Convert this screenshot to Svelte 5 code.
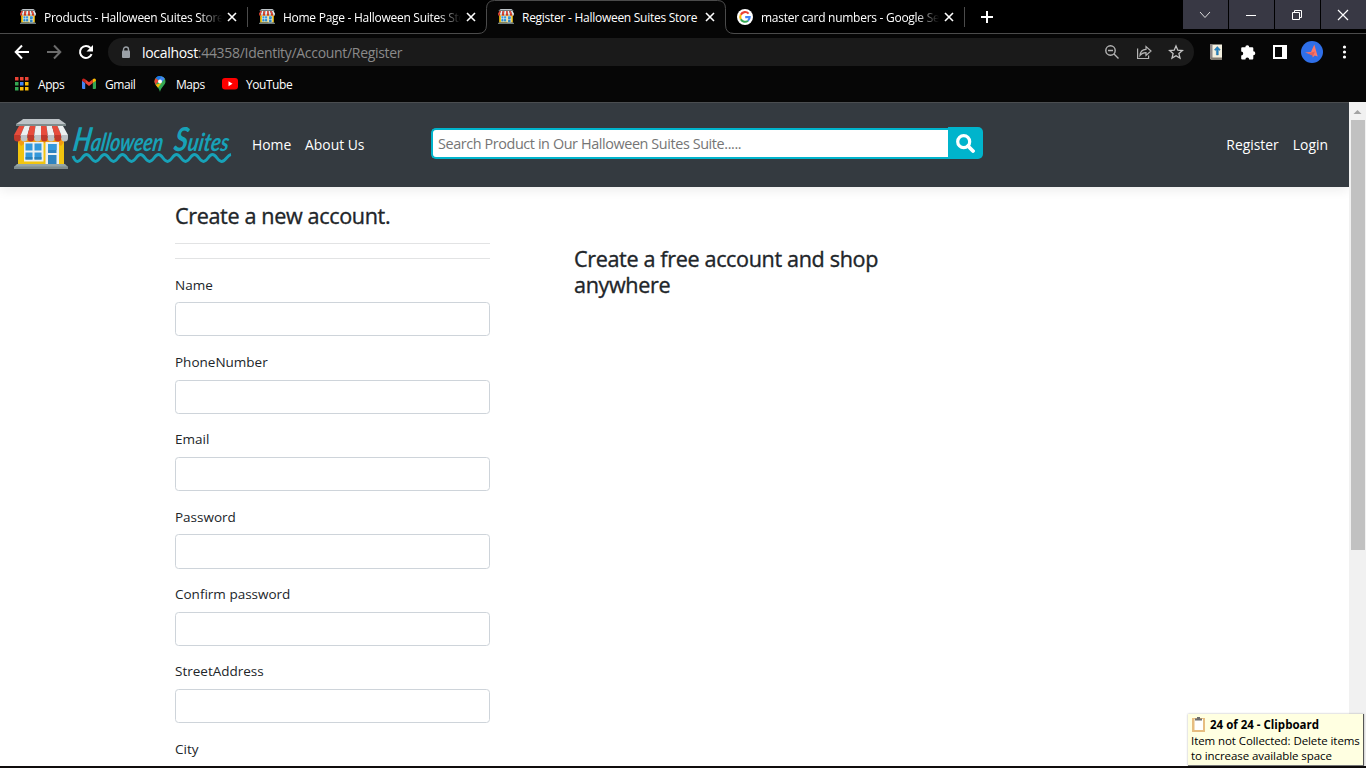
<script>
  const tabs = [
    { title: 'Products - Halloween Suites Store', icon: 'store' },
    { title: 'Home Page - Halloween Suites Store', icon: 'store' },
    { title: 'Register - Halloween Suites Store', icon: 'store', active: true },
    { title: 'master card numbers - Google Search', icon: 'google' }
  ];
  const fields = ['Name', 'PhoneNumber', 'Email', 'Password', 'Confirm password', 'StreetAddress', 'City'];
  const stripes = [0, 1, 2, 3, 4, 5, 6, 7];
  const dots = ['#ea4335', '#ea4335', '#ea4335', '#34a853', '#4285f4', '#fbbc05', '#34a853', '#fbbc05', '#fbbc05'];
  const wave = 'M73 156 Q75 161.500 77.500 161.500 ' +
    Array.from({ length: 8 }, (_, i) => {
      const x = 77.5 + i * 18;
      return `C${x + 4} 161.500 ${x + 5} 154.500 ${x + 9} 154.500 S${x + 14} 161.500 ${x + 18} 161.500`;
    }).join(' ') + ' C226 161.500 227 155 231 154.500';
</script>

{#snippet store(w, h)}
  <svg width={w} height={h} viewBox="0 0 54 50" preserveAspectRatio="none">
    <rect x="4" y="19" width="46" height="26" fill="#f1c40f" />
    <path d="M4 20h46v3l-3 4-4-3H11l-4 3-3-4z" fill="#f39c12" />
    <path d="M8 1 9 0h36l7 5H2z" fill="#bdc3c7" />
    <path d="M2 5h50v2H2z" fill="#7f8c8d" />
    {#each stripes as i}
      <path
        d="M{5 + i * 5.5} 7h5.5L{(i + 1) * 6.75} 16v1h-6.75v-1z"
        fill={i % 2 ? '#ecf0f1' : '#e74c3c'} />
      <path
        d="M{i * 6.75} 16h6.75v3a3.375 3.5 0 0 1-6.75 0z"
        fill={i % 2 ? '#bdc3c7' : '#c0392b'} />
    {/each}
    <rect x="10" y="23" width="19.500" height="19.500" fill="#ecf0f1" />
    <path d="M11.500 24.500h7v7h-7zM20.500 24.500h7v7h-7zM11.500 33.500h7v7h-7zM20.500 33.500h7v7h-7z" fill="#3498db" />
    <path d="M11.500 38h7v2.500h-7zM20.500 38h7v2.500h-7z" fill="#2980b9" />
    <rect x="31.500" y="23" width="13.500" height="22" fill="#ecf0f1" />
    <path d="M34 25h8.500v9H34zM34 36h8.500v9H34z" fill="#2f83bf" />
    <path d="M34 25h8.500v6H34z" fill="#3498db" />
    <path d="M3 45h48l3 3H0z" fill="#95a5a6" />
    <path d="M0 47.500h54V50H0z" fill="#7f8c8d" />
  </svg>
{/snippet}

<div class="window">
  <header class="chrome">
    <div class="tabstrip">
      <div class="tabs">
        {#each tabs as tab}
          <div class="tab" class:active={tab.active}>
            {#if tab.active}
              <svg class="outline" width="256" height="34" viewBox="0 0 256 34">
                <path d="M0 34V33.500Q8.500 33.500 8.500 25V8.500Q8.500.500 16.500.500H239.500Q247.500.500 247.500 8.500V25Q247.500 33.500 256 33.500V34z" fill="#060606" />
                <path d="M0 33.500Q8.500 33.500 8.500 25V8.500Q8.500.500 16.500.500H239.500Q247.500.500 247.500 8.500V25Q247.500 33.500 256 33.500" fill="none" stroke="#4b4b4b" />
              </svg>
            {/if}
            <span class="fav">
              {#if tab.icon === 'store'}
                {@render store(16, 15)}
              {:else}
                <svg width="16" height="16" viewBox="0 0 16 16">
                  <circle cx="8" cy="8" r="8" fill="#fff" />
                  <g fill="none" stroke-width="2.100">
                    <path d="M11.600 4.600A4.800 4.800 0 0 0 3.800 5.700" stroke="#ea4335" />
                    <path d="M3.800 5.700A4.800 4.800 0 0 0 3.800 10.300" stroke="#fbbc05" />
                    <path d="M3.800 10.300A4.800 4.800 0 0 0 11 11.700" stroke="#34a853" />
                    <path d="M11 11.700A4.800 4.800 0 0 0 12.700 8.100H8.200" stroke="#4285f4" />
                  </g>
                </svg>
              {/if}
            </span>
            <span class="title">{tab.title}</span>
            <svg class="close" width="10" height="10" viewBox="0 0 10 10"><path d="M1 1l8 8M9 1L1 9" stroke="#fff" stroke-width="1.600" /></svg>
          </div>
        {/each}
        <svg class="plus" width="12" height="12" viewBox="0 0 12 12"><path d="M6 0v12M0 6h12" stroke="#fff" stroke-width="2" /></svg>
      </div>
      <div class="controls">
        <span><svg width="12" height="12" viewBox="0 0 12 12"><path d="M1 3l5 5.500L11 3" fill="none" stroke="#ddd" /></svg></span>
        <span><svg width="12" height="12" viewBox="0 0 12 12"><path d="M1 6.500h10" stroke="#fff" /></svg></span>
        <span><svg width="12" height="12" viewBox="0 0 12 12"><path d="M1.500 3.500h7v7h-7zM3.500 3V1.500h7v7H9" fill="none" stroke="#fff" /></svg></span>
        <span><svg width="12" height="12" viewBox="0 0 12 12"><path d="M1 1l10 10M11 1L1 11" stroke="#fff" stroke-width="1.200" /></svg></span>
      </div>
    </div>

    <div class="toolbar">
      <svg class="nav" width="16" height="16" viewBox="0 0 16 16"><path d="M15 8H2M8 1.500L1.700 8 8 14.500" fill="none" stroke="#fff" stroke-width="2" /></svg>
      <svg class="nav" width="16" height="16" viewBox="0 0 16 16"><path d="M1 8h13M8 1.500L14.300 8 8 14.500" fill="none" stroke="#6c6c6c" stroke-width="2" /></svg>
      <svg class="nav" width="16" height="16" viewBox="0 0 16 16"><path d="M13.600 10.200A6 6 0 1 1 12.500 4" fill="none" stroke="#fff" stroke-width="2" /><path d="M15 1v6.500H8.500z" fill="#fff" /></svg>
      <div class="omnibox">
        <svg width="10" height="13" viewBox="0 0 10 13"><path d="M2.500 5V3.500a2.500 2.500 0 0 1 5 0V5" fill="none" stroke="#9aa0a6" stroke-width="1.400" /><rect x="1" y="4.500" width="8" height="7.500" rx="1" fill="#9aa0a6" /></svg>
        <span class="url"><b>localhost</b>:44358/Identity/Account/Register</span>
        <div class="actions">
          <svg width="16" height="16" viewBox="0 0 16 16"><g fill="none" stroke="#b5b5b5" stroke-width="1.400"><circle cx="6.500" cy="6.500" r="4.700" /><path d="M10 10l4.500 4.500M4 6.500h5" /></g></svg>
          <svg width="16" height="16" viewBox="0 0 16 16"><g fill="none" stroke="#b5b5b5" stroke-width="1.200"><path d="M1.600 4.500v10h11v-3" /><path d="M4 11.500C4.300 7.500 6.500 5.400 10 5.300V2.500l5 4.500-5 4.500V8.700C7.500 8.600 5.700 9.300 4 11.500z" /></g></svg>
          <svg width="16" height="16" viewBox="0 0 16 16"><path d="M8 2l1.800 4.200 4.600.400-3.500 3 1.100 4.500L8 11.700l-4 2.400 1.100-4.500-3.500-3 4.600-.400z" fill="none" stroke="#c4c4c4" stroke-width="1.300" /></svg>
        </div>
      </div>
      <div class="extensions">
        <svg width="16" height="16" viewBox="0 0 16 16"><path d="M2 .500h12V15.500H3l-1-1z" fill="#f3efdf" /><path d="M2 .500h2.500V15.500H3l-1-1z" fill="#8c8788" /><path d="M3 13.500h11v2H3z" fill="#827a70" /><path d="M9.300 2.500l3 3.200-1 .800-1-1V11H8.400V5.500l-1 1-1-.800z" fill="#2384c4" stroke="#176090" stroke-width=".4" /></svg>
        <svg width="16" height="16" viewBox="0 0 16 16"><path d="M5.300 3.200a2 2 0 0 1 4 0h3q1 0 1 1v3a2 2 0 0 1 0 4v3.300q0 1-1 1H9.200a1.900 1.900 0 0 0-3.800 0H2.200q-1 0-1-1v-3a2 2 0 0 0 0-4V4.200q0-1 1-1z" fill="#fff" /></svg>
        <svg width="16" height="16" viewBox="0 0 16 16"><path d="M1 1h14v14H1zM3 3v10h7V3z" fill="#fff" fill-rule="evenodd" /></svg>
        <svg class="avatar" width="22" height="22" viewBox="0 0 22 22"><circle cx="11" cy="11" r="11" fill="#2f6fe8" /><path d="M13.300 3.500L16.700 15.500l-3-1-2 2-.200-2.500-7.500-2.500 6-.500z" fill="#ff7766" /><path d="M10.500 11.500l3.500-1-2 4.500-5-2.500z" fill="#e0605e" /></svg>
        <svg width="16" height="16" viewBox="0 0 16 16"><g fill="#fff"><circle cx="8.500" cy="3" r="1.600" /><circle cx="8.500" cy="8" r="1.600" /><circle cx="8.500" cy="13" r="1.600" /></g></svg>
      </div>
    </div>

    <nav class="bookmarks">
      <span class="apps">
        <svg width="14" height="14" viewBox="0 0 14 14">
          {#each dots as c, i}<rect x={(i % 3) * 5} y={Math.floor(i / 3) * 5} width="3.500" height="3.500" fill={c} />{/each}
        </svg>Apps</span>
      <span class="gmail">
        <svg width="14" height="12" viewBox="0 0 14 12"><path d="M0 2.500l3.200 2.400V11H1q-1 0-1-1z" fill="#4285f4" /><path d="M14 2.500l-3.200 2.400V11H13q1 0 1-1z" fill="#34a853" /><path d="M3.200 1.300L7 4.200l3.800-2.900v3.800L7 8 3.200 5.100z" fill="#ea4335" /><path d="M0 2.600C0 .500 1.800 0 3.200 1.300v3.800L0 2.700z" fill="#c5221f" /><path d="M14 2.600C14 .500 12.200 0 10.800 1.300v3.800L14 2.700z" fill="#fbbc04" /></svg>Gmail</span>
      <span class="maps">
        <svg width="12" height="16" viewBox="0 0 12 16"><path d="M6 0a5.500 5.500 0 0 0-5.500 5.500C.500 9 5 11 6 16c1-5 5.500-7 5.500-10.500A5.500 5.500 0 0 0 6 0z" fill="#34a853" /><path d="M1.800 1.900L5 4.500 1.500 8.700A6 6 0 0 1 1.800 1.900z" fill="#ea4335" /><path d="M7.500.200a5.500 5.500 0 0 0-5.700 1.700L5 4.500z" fill="#1a73e8" /><path d="M7.500.200a5.500 5.500 0 0 1 3.300 2.600L7.500 6.500 5 4.500z" fill="#4285f4" /><path d="M1.500 8.700L7.500 7 4 11.800z" fill="#fbbc04" /><circle cx="6" cy="5.500" r="2" fill="#fff" /></svg>Maps</span>
      <span class="youtube">
        <svg width="16" height="12" viewBox="0 0 16 12"><rect width="16" height="11.500" rx="3" fill="#f00" /><path d="M6.500 3.300v5L10.500 5.800z" fill="#fff" /></svg>YouTube</span>
    </nav>
  </header>

  <div class="viewport">
    <div class="page">
      <nav class="navbar">
        <a class="brand" href="#home">
          {@render store(54, 50)}
          <svg class="wordmark" width="162" height="50" viewBox="71 119 162 50">
            <g transform="translate(72 150.500) skewX(-9)">
              <text textLength="90" lengthAdjust="spacingAndGlyphs"><tspan class="cap">H</tspan>alloween</text>
              <text x="101" textLength="55" lengthAdjust="spacingAndGlyphs"><tspan class="cap">S</tspan>uites</text>
            </g>
            <path d={wave} fill="none" stroke="#17a2b8" stroke-width="3" />
          </svg>
        </a>
        <a class="home" href="#home">Home</a>
        <a class="about" href="#about">About Us</a>
        <form class="search">
          <input type="text" placeholder="Search Product in Our Halloween Suites Suite....." />
          <button type="button" aria-label="Search">
            <svg width="19" height="19" viewBox="0 0 19 19"><circle cx="7.700" cy="7.700" r="6" fill="none" stroke="#fff" stroke-width="3.200" /><path d="M12 12l5 5" stroke="#fff" stroke-width="3.800" stroke-linecap="round" /></svg>
          </button>
        </form>
        <a class="register" href="#register">Register</a>
        <a class="login" href="#login">Login</a>
      </nav>

      <main>
        <section class="form">
          <h4>Create a new account.</h4>
          <hr />
          <hr />
          {#each fields as f, i}
            <div class="group">
              <label for="f{i}">{f}</label>
              <input id="f{i}" type="text" />
            </div>
          {/each}
        </section>
        <section class="promo">
          <h4>Create a free account and shop anywhere</h4>
        </section>
      </main>
    </div>
    <div class="scrollbar">
      <svg width="17" height="17" viewBox="0 0 17 17"><path d="M4.500 11L8.500 7l4 4z" fill="#a3a3a3" /></svg>
      <div class="thumb"></div>
    </div>
  </div>

  <div class="bottom"></div>

  <aside class="toast">
    <div class="head">
      <svg width="15" height="17" viewBox="0 0 15 17"><path d="M1 2h13v14H1z" fill="#e6bd80" /><path d="M3.500 3h8.500v11H3.500z" fill="#fff" /><path d="M4 4.500V2.500h2V1h3v1.500h2v2z" fill="#6d6d6d" /></svg>
      <strong>24 of 24 - Clipboard</strong>
    </div>
    <p>Item not Collected: Delete items</p>
    <p>to increase available space</p>
  </aside>
</div>

<style>
  :global(body) { margin: 0; overflow: hidden; }
  .window, .window * { box-sizing: border-box; }
  .window {
    position: relative;
    width: 1366px;
    height: 768px;
    display: flex;
    flex-direction: column;
    overflow: hidden;
    font-family: "Open Sans", "Noto Sans", sans-serif;
    background: #fff;
  }
  svg { display: block; flex: none; }

  .chrome { height: 102px; flex: none; background: #060606; color: #fff; font-size: 12px; }
  .tabstrip { height: 34px; display: flex; justify-content: space-between; background: #000; border-bottom: 1px solid #4b4b4b; }
  .tabs { display: flex; align-items: center; padding-left: 8px; }
  .tab { position: relative; width: 239px; height: 33px; display: flex; align-items: center; padding: 1px 0 0 12px; }
  .tab:not(.active)::after { content: ""; position: absolute; right: -1px; top: 7px; width: 1px; height: 20px; background: #4b4b4b; }
  .tab:nth-child(2)::after { display: none; }
  .outline { position: absolute; left: -8px; top: 0; }
  .fav { position: relative; width: 16px; height: 16px; margin-right: 8px; }
  .title {
    position: relative;
    width: 178px;
    overflow: hidden;
    white-space: nowrap;
    letter-spacing: -0.27px;
    -webkit-mask-image: linear-gradient(90deg, #000 155px, transparent 178px);
    mask-image: linear-gradient(90deg, #000 155px, transparent 178px);
  }
  .active .title { -webkit-mask-image: none; mask-image: none; }
  .close { position: relative; margin-left: 5px; }
  .plus { margin-left: 17px; }
  .controls { display: flex; gap: 1px; }
  .controls span { width: 45px; height: 29px; background: #383844; display: flex; align-items: center; justify-content: center; padding-right: 2px; }

  .toolbar { height: 36px; display: flex; align-items: center; padding-left: 14px; }
  .nav { margin-right: 16px; }
  .omnibox { width: 1086px; height: 28px; margin-left: -2px; border-radius: 14px; background: #1a1a1a; display: flex; align-items: center; padding: 0 10px 0 13px; }
  .url { margin-left: 11px; font-size: 14px; letter-spacing: -0.31px; color: #8a8a8a; }
  .url b { color: #fff; font-weight: 400; }
  .actions { margin-left: auto; display: flex; gap: 16px; }
  .extensions { display: flex; align-items: center; gap: 16px; margin-left: 14px; }
  .avatar { margin: 0 -3px; }

  .bookmarks { height: 28px; display: flex; align-items: center; padding-left: 15px; letter-spacing: -0.45px; }
  .bookmarks span { display: flex; align-items: center; height: 28px; }
  .apps { width: 67px; gap: 9px; }
  .gmail { width: 72px; gap: 9px; }
  .maps { width: 68px; gap: 10px; }
  .youtube { gap: 8px; }

  .viewport { height: 664px; flex: none; display: flex; overflow: hidden; }
  .page { width: 1349px; overflow: hidden; font-size: 14.4px; color: #212529; }
  .navbar {
    height: 85px;
    display: flex;
    align-items: center;
    padding: 0 21px 0 14px;
    background: #343a40;
    border-top: 1px solid #4a4d50;
    box-shadow: 0 3px 11px rgba(0, 0, 0, 0.08);
  }
  a { color: #fff; text-decoration: none; white-space: nowrap; font-size: 13.9px; margin-bottom: 2px; }
  .brand { display: flex; gap: 3px; width: 238px; }
  .wordmark { overflow: visible; }
  .wordmark text { font-family: Lato, sans-serif; font-style: italic; font-weight: 700; font-size: 25px; fill: #17a2b8; }
  .wordmark .cap { font-size: 33px; }
  .home { width: 53px; }
  .about { width: 126px; }
  .search { display: flex; align-items: flex-end; height: 32px; width: 552px; margin-bottom: 4px; }
  .search input { width: 517px; height: 31px; border: 2px solid #00b4cc; border-right: 0; border-radius: 5px 0 0 5px; padding: 0 5px; outline: 0; font: 14.4px "Open Sans", "Noto Sans", sans-serif; letter-spacing: -0.4px; }
  .search input::placeholder { color: #757575; opacity: 1; }
  .search button { width: 35px; height: 32px; padding: 0 0 0 8px; border: 0; border-radius: 0 5px 5px 0; background: #00b4cc; }
  .register { margin-left: auto; margin-right: 14px; }

  main { display: flex; padding-left: 175px; }
  .form { width: 315px; padding-top: 15.450px; }
  h4 { margin: 0; font-size: 21.6px; line-height: 25.920px; font-weight: 500; letter-spacing: -0.36px; -webkit-text-stroke: 0.35px #212529; }
  .form h4 { height: 25.900px; margin-bottom: 14.400px; line-height: 27px; }
  hr { height: 1px; margin: 0 0 14.400px; border: 0; background: #e2e3e4; }
  .group { height: 77.400px; }
  label { display: block; height: 21.600px; line-height: 23.600px; margin-bottom: 7.200px; font-size: 13.5px; }
  .group input { display: block; width: 100%; height: 34.200px; border: 1px solid #ced4da; border-radius: 3.600px; background: #fff; }
  .promo { margin-left: 84px; width: 315px; padding-top: 59px; }

  .scrollbar { width: 17px; background: #f1f1f1; padding-top: 1px; }
  .thumb { margin: 0 1px 0 2px; height: 430px; background: #c1c1c1; }
  .bottom { height: 2px; background: #100d0d; }

  .toast {
    position: absolute;
    left: 1188px;
    top: 714px;
    width: 176px;
    height: 52px;
    padding: 2px 0 0 3px;
    background: #ffffe1;
    border-right: 1px solid #555;
    border-bottom: 1px solid #777;
    box-shadow: 0 0 2px rgba(0, 0, 0, 0.3);
    color: #000;
    font-size: 11.5px;
    line-height: 15px;
    white-space: nowrap;
  }
  .head { display: flex; align-items: center; height: 17px; gap: 4px; }
  .toast p { margin: 0; letter-spacing: -0.08px; }
</style>
